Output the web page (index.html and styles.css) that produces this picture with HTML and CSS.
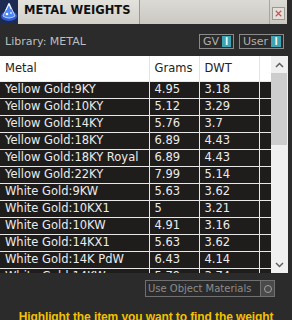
FILE: index.html
```html
<!DOCTYPE html>
<html lang="en">

<head>
  <meta charset="UTF-8" />
  <title>Metal Weights</title>
  <link rel="stylesheet" href="styles.css">
</head>

<body>

  <!-- Title Bar -->
  <div class="title-bar">
    <div class="app-icon">
      <svg width="18" height="24" viewBox="0 0 18 24">
        <rect width="18" height="24" fill="#1d2a52" />
        <ellipse cx="9" cy="16" rx="8" ry="5" fill="#2f5ad8" />
        <path d="M9 3 L15 16 Q9 20 3 16 Z" fill="#4f86f0" stroke="#bcd2ff" stroke-width="1" />
        <path d="M6 10 L9 4 L11 9" fill="none" stroke="#ffffff" stroke-width="1" />
        <circle cx="7" cy="14" r="1.3" fill="#ffffff" />
        <circle cx="11" cy="13" r="1" fill="#cfe0ff" />
      </svg>
    </div>
    <div class="title">METAL WEIGHTS</div>
    <div class="title-fill"></div>
    <div class="close-btn">
      <svg width="12" height="12" viewBox="0 0 12 12">
        <path d="M3 3 L9 9 M9 3 L3 9" stroke="#c85050" stroke-width="1.2" />
      </svg>
    </div>
  </div>

  <!-- Library Bar -->
  <div class="library-bar">
    <span class="library">Library: METAL</span>
    <div class="toggles">
      <div class="toggle gv"><span>GV</span><b>I</b></div>
      <div class="toggle user"><span>User</span><b>I</b></div>
    </div>
  </div>

  <!-- Metal Table -->
  <div class="table-area">
    <div class="table-box">
      <table>
        <colgroup>
          <col class="c-metal"><col class="c-grams"><col class="c-dwt"><col class="c-extra">
        </colgroup>
        <thead>
          <tr><th>Metal</th><th>Grams</th><th>DWT</th><th></th></tr>
        </thead>
        <tbody>
          <tr><td>Yellow Gold:9KY</td><td>4.95</td><td>3.18</td><td></td></tr>
          <tr><td>Yellow Gold:10KY</td><td>5.12</td><td>3.29</td><td></td></tr>
          <tr><td>Yellow Gold:14KY</td><td>5.76</td><td>3.7</td><td></td></tr>
          <tr><td>Yellow Gold:18KY</td><td>6.89</td><td>4.43</td><td></td></tr>
          <tr><td>Yellow Gold:18KY Royal</td><td>6.89</td><td>4.43</td><td></td></tr>
          <tr><td>Yellow Gold:22KY</td><td>7.99</td><td>5.14</td><td></td></tr>
          <tr><td>White Gold:9KW</td><td>5.63</td><td>3.62</td><td></td></tr>
          <tr><td>White Gold:10KX1</td><td>5</td><td>3.21</td><td></td></tr>
          <tr><td>White Gold:10KW</td><td>4.91</td><td>3.16</td><td></td></tr>
          <tr><td>White Gold:14KX1</td><td>5.63</td><td>3.62</td><td></td></tr>
          <tr><td>White Gold:14K PdW</td><td>6.43</td><td>4.14</td><td></td></tr>
          <tr><td>White Gold:14KW</td><td>5.79</td><td>3.74</td><td></td></tr>
        </tbody>
      </table>
    </div>
    <div class="scrollbar">
      <div class="arrow">
        <svg width="9" height="6" viewBox="0 0 9 6"><path d="M1 5 L4.5 1.5 L8 5" fill="none" stroke="#606060" stroke-width="1.5" /></svg>
      </div>
      <div class="track"><div class="thumb"></div></div>
      <div class="arrow">
        <svg width="9" height="6" viewBox="0 0 9 6"><path d="M1 1 L4.5 4.5 L8 1" fill="none" stroke="#606060" stroke-width="1.5" /></svg>
      </div>
    </div>
  </div>

  <!-- Options -->
  <div class="options">
    <div class="option"><span>Use Object Materials</span><i></i></div>
  </div>

  <p class="hint">Highlight the item you want to find the weight</p>

</body>

</html>
```

FILE: styles.css
```css
* {
  margin: 0;
  padding: 0;
  box-sizing: border-box;
}

body {
  font-family: 'DejaVu Sans', Verdana, sans-serif;
  background: #2b2b2b;
  width: 292px;
  height: 320px;
  overflow: hidden;
}

/* title bar */
.title-bar {
  height: 24px;
  display: flex;
  background: #2b2b2b;
}

.app-icon {
  width: 18px;
  height: 24px;
}

.title {
  background: linear-gradient(#e4e2dd, #d3d0ca);
  width: 122px;
  padding-left: 6px;
  font-size: 11.5px;
  font-weight: bold;
  color: #111;
  line-height: 21px;
  border-right: 1px solid #9a9892;
}

.title-fill {
  flex: 1;
  background: linear-gradient(#dcdad5, #cbc8c2);
}

.close-btn {
  width: 18px;
  background: linear-gradient(#dcdad5, #cbc8c2);
  border-left: 1px solid #a8a6a0;
  display: flex;
  justify-content: center;
  padding-top: 7px;
  margin-right: 5px;
}

.close-btn svg {
  border: 1px solid #9a9892;
  background: #e2e0db;
  width: 13px;
  height: 13px;
}

/* library bar */
.library-bar {
  height: 32px;
  display: flex;
  justify-content: space-between;
  align-items: center;
  padding: 2px 8px 0 5px;
}

.library {
  font-size: 11px;
  color: #bdbdbd;
}

.toggles {
  display: flex;
  gap: 5px;
}

.toggle {
  height: 15px;
  border: 1px solid #8a8a8a;
  display: flex;
  align-items: center;
  padding: 0 2px 0 3px;
  gap: 3px;
  font-size: 11px;
  color: #b0b0b0;
}

.toggle b {
  width: 11px;
  height: 11px;
  background: #3ea4b4;
  color: #fff;
  font-size: 10px;
  font-weight: bold;
  line-height: 11px;
  text-align: center;
  font-family: 'Liberation Sans', sans-serif;
}

.toggle.gv {
  width: 35px;
}

.toggle.user {
  width: 45px;
}

/* table */
.table-area {
  display: flex;
  height: 217px;
}

.table-box {
  width: 271px;
  height: 217px;
  overflow: hidden;
  background: #1f1d1b;
}

table {
  width: 271px;
  table-layout: fixed;
  border-collapse: collapse;
  font-size: 11.5px;
}

col.c-metal { width: 149px; }
col.c-grams { width: 50px; }
col.c-dwt { width: 60px; }
col.c-extra { width: 12px; }

th {
  height: 25px;
  background: #fff;
  color: #222;
  font-weight: normal;
  text-align: left;
  padding-left: 5px;
  border-left: 1px solid #e4e4e4;
}

th:first-child,
td:first-child {
  border-left: none;
}

td {
  height: 17px;
  color: #ebebeb;
  padding-left: 5px;
  border-top: 1px solid #e8e8e8;
  border-left: 1px solid #e8e8e8;
  white-space: nowrap;
  overflow: hidden;
  line-height: 15px;
}

.scrollbar {
  width: 17px;
  background: #f0f0f0;
  display: flex;
  flex-direction: column;
}

.arrow {
  height: 17px;
  display: flex;
  justify-content: center;
  align-items: center;
}

.track {
  flex: 1;
}

.thumb {
  height: 72px;
  width: 16px;
  background: #cdcdcd;
}

/* options */
.options {
  display: flex;
  justify-content: flex-end;
  padding: 7px 17px 0 0;
}

.option {
  width: 130px;
  height: 17px;
  border: 1px solid #707070;
  display: flex;
  align-items: center;
  justify-content: space-between;
  padding-left: 2px;
  font-size: 10px;
  color: #8c8c8c;
  white-space: nowrap;
}

.option i {
  width: 14px;
  height: 15px;
  background: #4a4a4a;
  border-left: 1px solid #707070;
  position: relative;
}

.option i::after {
  content: "";
  position: absolute;
  left: 3px;
  top: 4px;
  width: 6px;
  height: 6px;
  border: 1px solid #a0a0a0;
  border-radius: 50%;
}

.hint {
  margin-top: 13px;
  text-align: center;
  font-family: 'Liberation Sans', Arial, sans-serif;
  font-weight: bold;
  font-size: 12px;
  letter-spacing: -0.1px;
  color: #f2c200;
}
```
